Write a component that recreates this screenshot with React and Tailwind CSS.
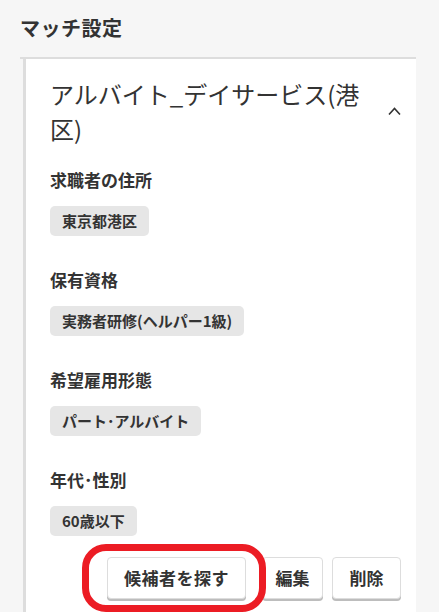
import React from 'react';

const SECTIONS = [
  { label: '求職者の住所', value: '東京都港区' },
  { label: '保有資格', value: '実務者研修(ヘルパー1級)' },
  { label: '希望雇用形態', value: 'パート･アルバイト' },
  { label: '年代･性別', value: '60歳以下' },
];

const FONT = { fontFamily: '"Noto Sans CJK JP", "Noto Sans", sans-serif' };

export default function App() {
  return (
    <div className="min-h-[612px] h-[612px] overflow-hidden bg-[#f6f6f6] pl-5 pr-[23px] pt-[14px] text-[#333]" style={FONT}>
      <h2 className="h-7 text-[20px] font-bold leading-7 tracking-[0.5px]">マッチ設定</h2>

      <div className="mt-[15px] h-[600px] border-t-2 border-[#dddddd]">
        <div className="ml-[3px] h-full border-l-[3px] border-[#dddddd] bg-white pl-6 pr-[15px] pt-[17px]">
          {/* title */}
          <div className="flex items-center">
            <div className="flex-1 pr-[2px] text-[24px] leading-[35px]">アルバイト_デイサービス(港区)</div>
            <div className="flex w-6 justify-end">
              <svg width="13" height="8" viewBox="0 0 13 8" fill="none">
                <polyline points="1,7.5 6.5,1.5 12,7.5" stroke="#333" strokeWidth="1.6" />
              </svg>
            </div>
          </div>

          <div className="mt-[22px] flex flex-col gap-8">
            {SECTIONS.map((s, i) => (
              <div key={i}>
                <div className="h-6 text-[17px] font-bold leading-6">{s.label}</div>
                <div className="mt-[14px] flex">
                  <span className="rounded-[5px] bg-[#e6e6e6] px-3 text-[15px] font-bold leading-[30px]">{s.value}</span>
                </div>
              </div>
            ))}
          </div>

          {/* actions */}
          <div className="mt-[21px] flex justify-end">
            <div className="relative mr-4">
              <button className="h-[42px] w-[139px] rounded-[4px] border border-[#dddddd] bg-white text-[17px] font-bold tracking-[0.5px] shadow-[0_2px_0_#bdbdbd]">
                候補者を探す
              </button>
              <div className="pointer-events-none absolute left-[-25px] top-[-13px] z-10 h-[68px] w-[184px] rounded-[24px] border-[7px] border-[#ec1c24]" />
            </div>
            <button className="mr-[9px] h-[42px] w-[61px] rounded-[4px] border border-[#dddddd] bg-white text-[17px] font-bold shadow-[0_2px_0_#bdbdbd]">
              編集
            </button>
            <button className="h-[42px] w-[69px] rounded-[4px] border border-[#dddddd] bg-white text-[17px] font-bold shadow-[0_2px_0_#bdbdbd]">
              削除
            </button>
          </div>
        </div>
      </div>
    </div>
  );
}
